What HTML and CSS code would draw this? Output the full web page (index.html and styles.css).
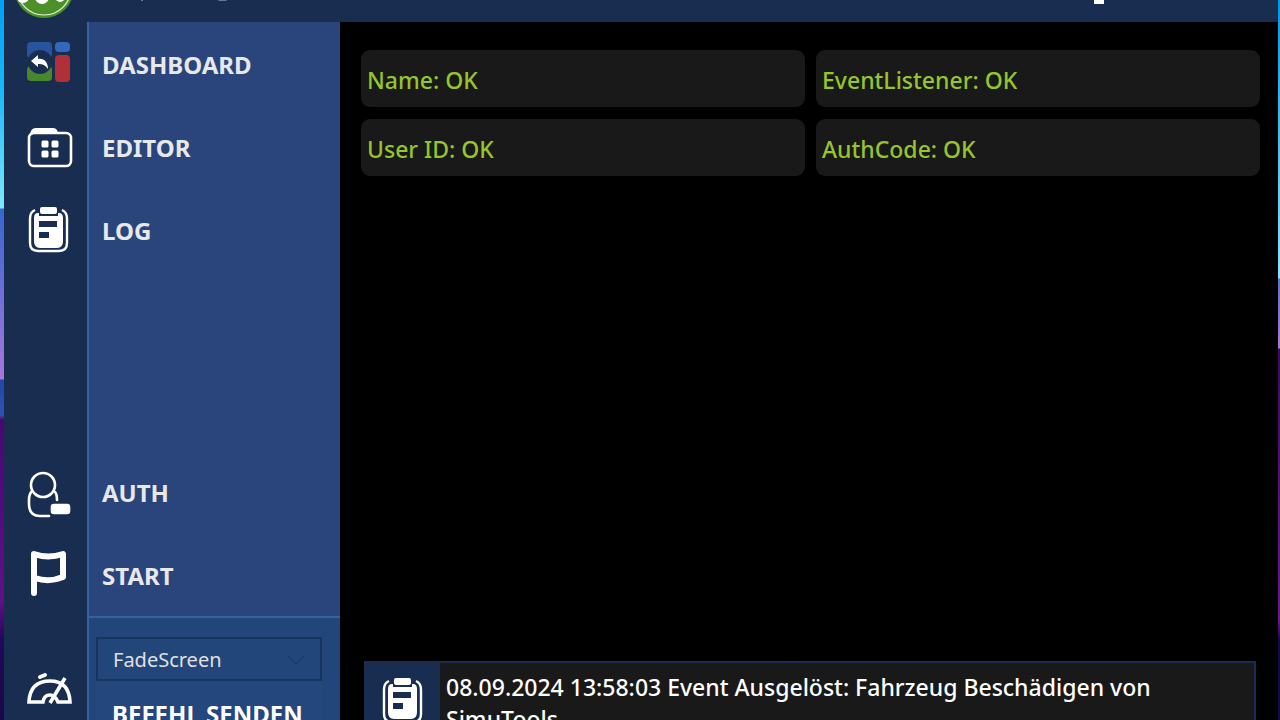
FILE: index.html
```html
<!DOCTYPE html>
<html lang="de">
<head>
    <meta charset="UTF-8">
    <meta name="viewport" content="width=device-width, initial-scale=1.0">
    <title>SimuTools</title>
    <link rel="stylesheet" href="styles.css">
</head>
<body>

<svg class="symbols" aria-hidden="true">
    <symbol id="clipboard" viewBox="0 0 46 46">
        <path d="M9 2Q4 4 4 11V35Q4 43 12 43H33Q41 43 41 35V11Q41 4 36 2" fill="none" stroke="#fff" stroke-width="2.4"/>
        <path d="M12 5H33Q37 5 37 10V33Q37 40 31 40H14Q8 40 8 33V10Q8 5 12 5Z" fill="#fff"/>
        <path d="M13 0H32V8H13Z" fill="#182d4f"/>
        <rect x="14" y="-1" width="17" height="7" rx="2" fill="#fff"/>
        <path d="M13 13H31V19H13ZM13 24H23V30H13Z" fill="#182d4f"/>
    </symbol>
</svg>

<div class="window">
    <header class="titlebar">
        <svg class="logo" viewBox="0 0 60 60" aria-hidden="true">
            <circle cx="30" cy="30" r="30" fill="#4c9128"/>
            <circle cx="30" cy="30" r="27" fill="none" stroke="#e4f0dc" stroke-width="1.2"/>
            <circle cx="28" cy="39" r="7" fill="#fff"/>
            <circle cx="46" cy="39" r="5" fill="#fff"/>
            <circle cx="9" cy="39" r="6" fill="#fff"/>
        </svg>
        <svg class="marks" viewBox="0 0 1000 22" aria-hidden="true">
            <path d="M67 0h2v1h-2zM144 0h9l-1 1h-7z" fill="#68788f"/>
            <path d="M1020 0h10v4h-10z" fill="#fff"/>
        </svg>
    </header>

    <div class="main">
        <nav class="rail">
            <button class="icon-btn dashboard" aria-label="Dashboard">
                <svg viewBox="0 0 46 46">
                    <rect x="1" y="2" width="25" height="16" rx="4" fill="#27549c"/>
                    <rect x="1" y="26" width="25" height="15" rx="4" fill="#46882b"/>
                    <rect x="29" y="2" width="15" height="10" rx="4" fill="#3368bd"/>
                    <rect x="29" y="15" width="15" height="27" rx="4" fill="#b12f36"/>
                    <circle cx="14" cy="22" r="12" fill="#182d4f"/>
                    <path d="M5 21L12 15V19C18 18 22 22 22 29C19 25 17 24 12 24V27Z" fill="#fff"/>
                </svg>
            </button>
            <button class="icon-btn editor" aria-label="Editor">
                <svg viewBox="0 0 46 46">
                    <path d="M4 12Q4 4 10 4H27Q31 4 32 9H9Z" fill="#fff"/>
                    <rect x="3" y="9" width="42" height="33" rx="5" fill="none" stroke="#fff" stroke-width="2.6"/>
                    <path d="M17 18h4v4h-4zM27 18h4v4h-4zM17 28h4v4h-4zM27 28h4v4h-4z" fill="#fff" stroke="#fff" stroke-width="3" stroke-linejoin="round"/>
                </svg>
            </button>
            <button class="icon-btn log" aria-label="Log">
                <svg><use href="#clipboard"/></svg>
            </button>
            <button class="icon-btn auth" aria-label="Auth">
                <svg viewBox="0 0 46 46" fill="none" stroke="#fff" stroke-width="2.6">
                    <circle cx="17" cy="13" r="12"/>
                    <path d="M6 19Q3 22 3 28V32Q3 44 14 44H23M28 19Q31 21 31 28" stroke-linecap="round"/>
                    <rect x="26" y="33" width="17" height="8" rx="2" fill="#fff"/>
                </svg>
            </button>
            <button class="icon-btn start" aria-label="Start">
                <svg viewBox="0 0 46 46" fill="none" stroke="#fff" stroke-width="6" stroke-linecap="round" stroke-linejoin="round">
                    <path d="M8 43V4Q22 9 37 4V27Q23 33 9 28"/>
                </svg>
            </button>
            <button class="icon-btn speed" aria-label="Status">
                <svg viewBox="0 0 46 46" fill="none" stroke="#fff" stroke-width="3.6">
                    <path d="M3 36Q4 15 24 15Q43 15 44 36H32Q29 29 24 29Q18 29 17 36Z"/>
                    <path d="M24 37L39 12"/>
                    <path d="M14 11L19 9" stroke-width="4" stroke-linecap="round"/>
                </svg>
            </button>
        </nav>

        <aside class="sidebar">
            <ul class="menu">
                <li><a href="#dashboard">DASHBOARD</a></li>
                <li><a href="#editor">EDITOR</a></li>
                <li><a href="#log">LOG</a></li>
                <li class="bottom"><a href="#auth">AUTH</a></li>
                <li><a href="#start">START</a></li>
            </ul>
            <div class="command">
                <select class="command-select" aria-label="Befehl">
                    <option>FadeScreen</option>
                </select>
                <svg class="chevron" viewBox="0 0 18 10" aria-hidden="true"><path d="M1 1L9 9L17 1" fill="none" stroke="#1c3c6b" stroke-width="1.5"/></svg>
                <button class="send-btn">BEFEHL SENDEN</button>
            </div>
        </aside>

        <main class="content">
            <div class="status-grid">
                <div class="status">Name: OK</div>
                <div class="status">EventListener: OK</div>
                <div class="status">User ID: OK</div>
                <div class="status">AuthCode: OK</div>
            </div>
            <div class="event">
                <div class="event-icon"><svg><use href="#clipboard"/></svg></div>
                <p class="event-text">08.09.2024 13:58:03 Event Ausgelöst: Fahrzeug Beschädigen von SimuTools</p>
            </div>
        </main>
    </div>
</div>

</body>
</html>
```

FILE: styles.css
```css
* {
    box-sizing: border-box;
}

body {
    margin: 0;
    height: 100vh;
    overflow: hidden;
    padding: 0 2px 0 4px;
    font-family: "Noto Sans", "Open Sans", sans-serif;
    /* left and right desktop strips behind the window */
    background:
        linear-gradient(#00a0f5 0, #18b8fa 90px, #80e8fb 208px, #3866d0 209px, #a878dc 379px, #2048a8 380px, #3450b0 415px, #480870 420px, #601088 600px, #20085a 640px, #180848 720px) left / 50% 100% no-repeat,
        linear-gradient(#0098e8 0, #80e8fb 278px, #6070d0 279px, #a878dc 348px, #400860 349px, #681890 620px, #180848 640px) right / 50% 100% no-repeat;
}

.symbols {
    display: none;
}

.window {
    display: flex;
    flex-direction: column;
    height: 100%;
    background-color: #182d4f;
}

/* Title bar */
.titlebar {
    display: flex;
    align-items: flex-end;
    flex: none;
    height: 22px;
    padding: 0 0 4px 10px;
}

.logo {
    flex: none;
    width: 60px;
    height: 60px;
}

.marks {
    flex: none;
    align-self: flex-start;
    width: 1000px;
    height: 22px;
    overflow: visible;
}

.main {
    display: flex;
    flex: 1;
    min-height: 0;
}

/* Icon rail */
.rail {
    display: flex;
    flex-direction: column;
    align-items: center;
    flex: none;
    width: 83px;
    padding: 18px 0 0 6px;
}

.icon-btn {
    flex: none;
    width: 46px;
    height: 46px;
    padding: 0;
    border: none;
    background: none;
    cursor: pointer;
}

.icon-btn svg,
.event-icon svg {
    display: block;
    width: 46px;
    height: 46px;
    overflow: visible;
}

#clipboard {
    overflow: visible;
}

.icon-btn.editor {
    margin-top: 38px;
}

.icon-btn.log {
    margin-top: 38px;
}

.icon-btn.auth {
    margin-top: 218px;
}

.icon-btn.start {
    margin-top: 32px;
}

.icon-btn.speed {
    margin-top: 70px;
}

/* Sidebar */
.sidebar {
    display: flex;
    flex-direction: column;
    flex: none;
    width: 253px;
    border-left: 2px solid #34639f;
    background-color: #29457c;
    overflow: hidden;
}

.menu {
    display: flex;
    flex: 1;
    flex-direction: column;
    margin: 0;
    padding: 0;
    list-style: none;
}

.menu a {
    display: block;
    height: 83px;
    padding: 0 13px;
    font-size: 24px;
    font-weight: 700;
    line-height: 86px;
    color: #e8e8e8;
    text-decoration: none;
}

.menu .bottom {
    margin-top: auto;
}

.command {
    position: relative;
    flex: none;
    height: 104px;
    padding: 19px 18px 0 7px;
    border-top: 2px solid #34639f;
    background-color: #22457a;
}

.command-select {
    display: block;
    width: 100%;
    height: 44px;
    padding: 0 15px;
    border: 2px solid #17345f;
    border-radius: 0;
    background-color: #22457a;
    font-family: inherit;
    font-size: 20px;
    color: #e0e0e0;
    appearance: none;
}

.chevron {
    position: absolute;
    top: 37px;
    right: 35px;
    width: 18px;
    height: 10px;
}

.send-btn {
    display: block;
    width: 100%;
    height: 64px;
    padding: 0 16px;
    border: none;
    background-color: #24477e;
    font-family: inherit;
    font-size: 24px;
    font-weight: 700;
    text-align: left;
    white-space: nowrap;
    color: #fff;
}

/* Content */
.content {
    display: flex;
    flex-direction: column;
    justify-content: space-between;
    flex: 1;
    min-width: 0;
    padding: 28px 18px 0 21px;
    background-color: #000;
}

.status-grid {
    display: grid;
    grid-template-columns: 1fr 1fr;
    gap: 12px 11px;
}

.status {
    height: 57px;
    padding: 0 6px;
    border-radius: 9px;
    background-color: #191919;
    font-size: 23px;
    font-weight: 500;
    line-height: 60px;
    color: #96c42c;
}

.event {
    display: flex;
    height: 80px;
    margin: 0 4px -21px 3px;
    border: 2px solid #1b2e52;
    background-color: #191919;
}

.event-icon {
    flex: none;
    width: 74px;
    padding: 16px 14px;
    background-color: #182d4f;
}

.event-text {
    margin: 8px 6px;
    font-size: 23px;
    font-weight: 500;
    line-height: 32px;
    color: #fff;
}
```
